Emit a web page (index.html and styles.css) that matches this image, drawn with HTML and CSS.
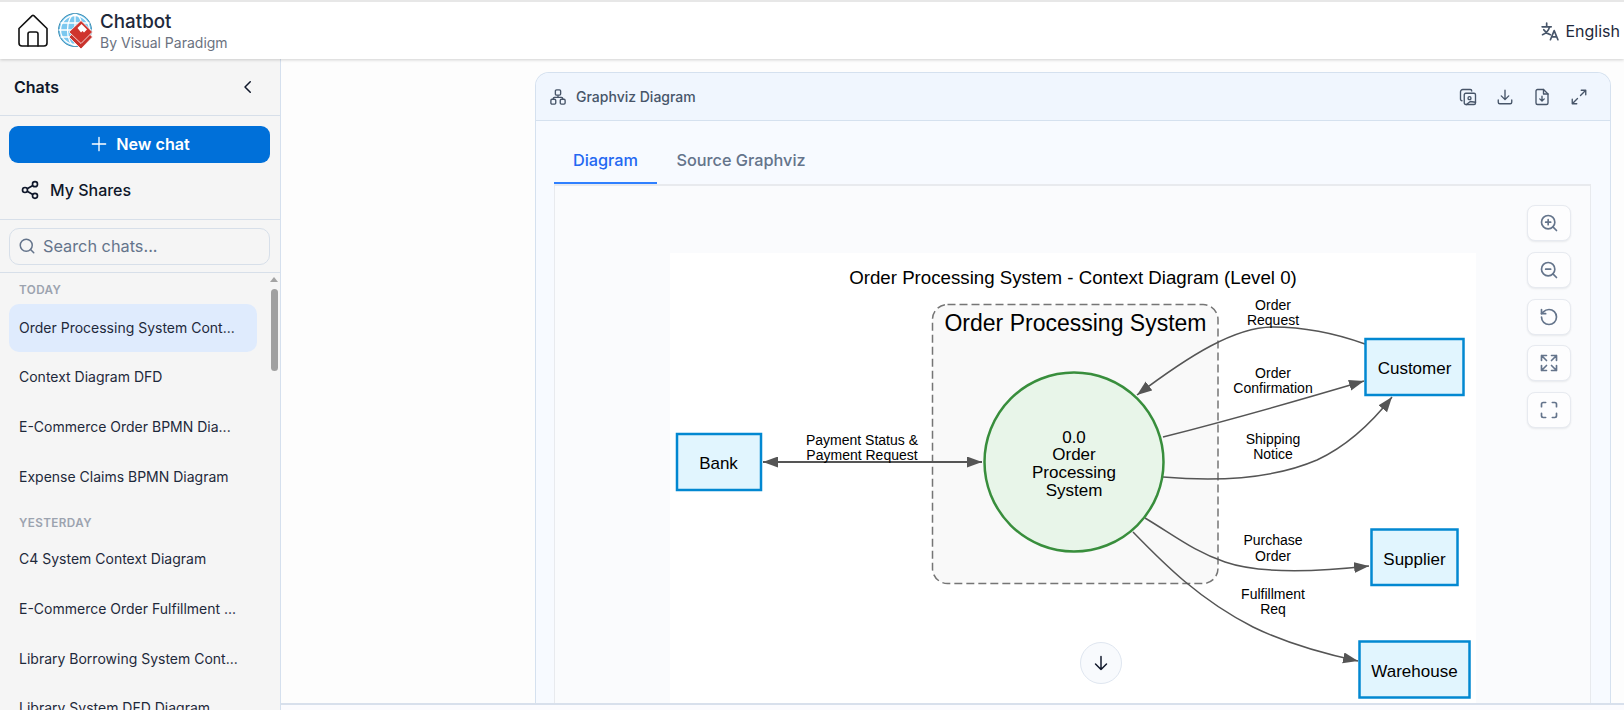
FILE: index.html
```html
<!DOCTYPE html>
<html lang="en">
<head>
<meta charset="utf-8">
<title>Chatbot</title>
<link rel="stylesheet" href="styles.css">
</head>
<body>
<div class="app">
  <header class="topbar">
    <div class="brand">
      <svg class="home-icon" viewBox="0 0 32 34" fill="none" stroke="#111" stroke-width="1.6" stroke-linejoin="round" stroke-linecap="round"><path d="M2 14.5 15.2 1.6a1.2 1.2 0 0 1 1.6 0L30 14.5V29a3 3 0 0 1-3 3H5a3 3 0 0 1-3-3Z"/><path d="M11 32V20a2 2 0 0 1 2-2h6a2 2 0 0 1 2 2v12"/></svg>
      <svg class="logo" viewBox="0 0 36 38"><circle cx="18" cy="18" r="16.500" fill="#7cc8ef" stroke="#3f8fb5" stroke-width="1"/><g fill="none" stroke="#fff" stroke-width="1.300"><circle cx="18" cy="18" r="14.500"/><ellipse cx="18" cy="18" rx="7.500" ry="15.500"/><path d="M18 2v32M3.500 11h29M3.500 25h29M1.500 18h33"/></g><path d="M12 25 24 13.500 35.500 25 24 37Z" fill="#c9332d" stroke="#fff" stroke-width=".8"/><path d="M12 20 24 8.500 35.500 20 24 31.500Z" fill="#cf342d" stroke="#fff" stroke-width=".8"/><path d="M20.500 16 24.500 12 30 17.500 27 20.500 25.500 19 24 20.500Z" fill="#fff"/></svg>
      <div class="brand-text">
        <div class="brand-name">Chatbot</div>
        <div class="brand-sub">By Visual Paradigm</div>
      </div>
    </div>
    <div class="lang">
      <svg class="lang-icon" viewBox="0 0 24 24" fill="none" stroke="#475569" stroke-width="2" stroke-linecap="round" stroke-linejoin="round"><path d="M2.500 7h11M8 2.500V7M4.500 10.500c2 3 4.500 5 8 6M11.500 7c-1 4-4 7.500-8.500 9.500"/><path d="m12.500 22.500 4.500-11 4.500 11M14 19h6"/></svg>
      <span>English</span>
    </div>
  </header>

  <div class="body">
    <aside class="sidebar">
      <div class="side-head">
        <span class="side-title">Chats</span>
        <svg class="chev" viewBox="0 0 24 24" fill="none" stroke="#0f172a" stroke-width="2" stroke-linecap="round" stroke-linejoin="round"><path d="m15 5-7 7 7 7"/></svg>
      </div>
      <div class="side-actions">
        <button class="new-chat">
          <svg class="plus" viewBox="0 0 24 24" fill="none" stroke="#fff" stroke-width="1.600" stroke-linecap="round"><path d="M12 4v16M4 12h16"/></svg>
          <span>New chat</span>
        </button>
        <div class="shares">
          <svg class="share-icon" viewBox="0 0 24 24" fill="none" stroke="#0f172a" stroke-width="2"><circle cx="18" cy="5" r="3"/><circle cx="6" cy="12" r="3"/><circle cx="18" cy="19" r="3"/><path d="m8.600 13.500 6.800 4M15.400 6.500l-6.800 4"/></svg>
          <span>My Shares</span>
        </div>
      </div>
      <div class="search-wrap">
        <div class="search">
          <svg class="search-icon" viewBox="0 0 24 24" fill="none" stroke="#64748b" stroke-width="2" stroke-linecap="round"><circle cx="11" cy="11" r="8"/><path d="m21 21-4.300-4.300"/></svg>
          <span>Search chats...</span>
        </div>
      </div>
      <div class="chat-scroll">
        <div class="chat-list">
          <div class="group-label">TODAY</div>
          <div class="chat-item active">Order Processing System Cont...</div>
          <div class="chat-item">Context Diagram DFD</div>
          <div class="chat-item">E-Commerce Order BPMN Dia...</div>
          <div class="chat-item">Expense Claims BPMN Diagram</div>
          <div class="group-label second">YESTERDAY</div>
          <div class="chat-item">C4 System Context Diagram</div>
          <div class="chat-item">E-Commerce Order Fulfillment ...</div>
          <div class="chat-item">Library Borrowing System Cont...</div>
          <div class="chat-item">Library System DFD Diagram</div>
        </div>
        <div class="scrollbar">
          <div class="scroll-arrow"></div>
          <div class="scroll-thumb"></div>
        </div>
      </div>
    </aside>

    <main class="main">
      <section class="card">
        <div class="card-head">
          <div class="card-title">
            <svg class="net-icon" viewBox="0 0 24 24" fill="none" stroke="#475569" stroke-width="1.800"><rect x="8.500" y="2.500" width="7" height="7" rx="1.500"/><rect x="2.500" y="15" width="6.500" height="6.500" rx="1.500"/><rect x="15" y="15" width="6.500" height="6.500" rx="1.500"/><path d="M12 9.500V12.500M5.700 15v-1a1.500 1.500 0 0 1 1.500-1.500h9.600a1.500 1.500 0 0 1 1.500 1.500v1"/></svg>
            <span>Graphviz Diagram</span>
          </div>
          <div class="card-tools">
            <svg class="tool" viewBox="0 0 24 24" fill="none" stroke="#475569" stroke-width="1.800" stroke-linecap="round" stroke-linejoin="round"><path d="M4 17a2 2 0 0 1-2-2V5a3 3 0 0 1 3-3h10a2 2 0 0 1 2 2"/><rect x="7" y="7" width="15" height="15" rx="2"/><circle cx="14" cy="13.500" r="2"/><path d="m10 22 5-4 7 1"/></svg>
            <svg class="tool" viewBox="0 0 24 24" fill="none" stroke="#475569" stroke-width="1.800" stroke-linecap="round" stroke-linejoin="round"><path d="M12 3v12M7 10.500l5 5 5-5M3 16v3a2 2 0 0 0 2 2h14a2 2 0 0 0 2-2v-3"/></svg>
            <svg class="tool" viewBox="0 0 24 24" fill="none" stroke="#475569" stroke-width="1.800" stroke-linecap="round" stroke-linejoin="round"><path d="M14 2H6a2 2 0 0 0-2 2v16a2 2 0 0 0 2 2h12a2 2 0 0 0 2-2V8Z"/><path d="M14 2v6h6M12 11v6M9 14.500l3 3 3-3"/></svg>
            <svg class="tool" viewBox="0 0 24 24" fill="none" stroke="#475569" stroke-width="1.800" stroke-linecap="round" stroke-linejoin="round"><path d="M14 10l7-7M15 3h6v6M10 14l-7 7M9 21H3v-6"/></svg>
          </div>
        </div>
        <div class="card-body">
          <div class="tabs">
            <div class="tab active">Diagram</div>
            <div class="tab">Source Graphviz</div>
          </div>
          <div class="canvas">
            <svg class="diagram" viewBox="670 253 806 450">
              <defs>
                <marker id="tip" markerWidth="16" markerHeight="12" refX="15" refY="5.500" orient="auto" markerUnits="userSpaceOnUse"><path d="M0 0 15 5.500 0 11Z" fill="#555"/></marker>
                <marker id="tipStart" markerWidth="16" markerHeight="12" refX="0" refY="5.500" orient="auto" markerUnits="userSpaceOnUse"><path d="M15 0 0 5.500 15 11Z" fill="#555"/></marker>
              </defs>
              <text class="t-title" x="1073" y="284">Order Processing System - Context Diagram (Level 0)</text>
              <rect class="cluster" x="932.500" y="304.500" width="285.500" height="279" rx="15"/>
              <text class="t-cluster" x="1075.500" y="331">Order Processing System</text>

              <path class="edge thick" d="M763 462H982" marker-start="url(#tipStart)" marker-end="url(#tip)"/>
              <path class="edge" d="M1365 344C1340 335 1310 327 1273 327C1235 327 1190 355 1137 395" marker-end="url(#tip)"/>
              <path class="edge" d="M1163 437C1230 420 1300 400 1364 381" marker-end="url(#tip)"/>
              <path class="edge" d="M1163 477C1220 482 1275 478 1317 460C1345 447 1370 425 1392 397" marker-end="url(#tip)"/>
              <path class="edge" d="M1145 518C1175 536 1195 552 1225 562C1260 574 1315 572 1369 566" marker-end="url(#tip)"/>
              <path class="edge" d="M1133 532C1165 565 1200 600 1253 627C1290 645 1325 654 1358 661" marker-end="url(#tip)"/>

              <circle class="process" cx="1074" cy="462" r="89.500"/>
              <text class="t-node" x="1074" y="443">0.0</text>
              <text class="t-node" x="1074" y="460">Order</text>
              <text class="t-node" x="1074" y="478">Processing</text>
              <text class="t-node" x="1074" y="496">System</text>

              <rect class="entity" x="677" y="434" width="84" height="56"/>
              <text class="t-node" x="718.500" y="469">Bank</text>
              <rect class="entity" x="1365.500" y="339" width="98" height="56"/>
              <text class="t-node" x="1414.500" y="374">Customer</text>
              <rect class="entity" x="1371.500" y="529.500" width="86" height="55.500"/>
              <text class="t-node" x="1414.500" y="565">Supplier</text>
              <rect class="entity" x="1359.500" y="641.500" width="110" height="56"/>
              <text class="t-node" x="1414.500" y="677">Warehouse</text>

              <text class="t-edge" x="862" y="445">Payment Status &amp;</text>
              <text class="t-edge" x="862" y="460">Payment Request</text>
              <text class="t-edge" x="1273" y="310">Order</text>
              <text class="t-edge" x="1273" y="325">Request</text>
              <text class="t-edge" x="1273" y="378">Order</text>
              <text class="t-edge" x="1273" y="393">Confirmation</text>
              <text class="t-edge" x="1273" y="444">Shipping</text>
              <text class="t-edge" x="1273" y="459">Notice</text>
              <text class="t-edge" x="1273" y="545">Purchase</text>
              <text class="t-edge" x="1273" y="561">Order</text>
              <text class="t-edge" x="1273" y="599">Fulfillment</text>
              <text class="t-edge" x="1273" y="614">Req</text>
            </svg>
            <div class="zoom-tools">
              <div class="zbtn"><svg viewBox="0 0 24 24" fill="none" stroke="#64748b" stroke-width="2" stroke-linecap="round"><circle cx="11" cy="11" r="8"/><path d="m21 21-4.300-4.300M11 8v6M8 11h6"/></svg></div>
              <div class="zbtn"><svg viewBox="0 0 24 24" fill="none" stroke="#64748b" stroke-width="2" stroke-linecap="round"><circle cx="11" cy="11" r="8"/><path d="m21 21-4.300-4.300M8 11h6"/></svg></div>
              <div class="zbtn"><svg viewBox="0 0 24 24" fill="none" stroke="#64748b" stroke-width="2" stroke-linecap="round" stroke-linejoin="round"><path d="M3 12a9 9 0 1 0 9-9 9.750 9.750 0 0 0-6.740 2.740L3 8"/><path d="M3 3v5h5"/></svg></div>
              <div class="zbtn"><svg viewBox="0 0 24 24" fill="none" stroke="#64748b" stroke-width="2" stroke-linecap="round" stroke-linejoin="round"><path d="M3 9V3h6M3 3l6 6M21 9V3h-6M21 3l-6 6M3 15v6h6M3 21l6-6M21 15v6h-6M21 21l-6-6"/></svg></div>
              <div class="zbtn"><svg viewBox="0 0 24 24" fill="none" stroke="#64748b" stroke-width="2" stroke-linecap="round" stroke-linejoin="round"><path d="M3 8V5a2 2 0 0 1 2-2h3M16 3h3a2 2 0 0 1 2 2v3M21 16v3a2 2 0 0 1-2 2h-3M8 21H5a2 2 0 0 1-2-2v-3"/></svg></div>
            </div>
            <div class="scroll-down"><svg viewBox="0 0 24 24" fill="none" stroke="#0f172a" stroke-width="1.600" stroke-linecap="round" stroke-linejoin="round"><path d="M12 5v14M6 13l6 6 6-6"/></svg></div>
          </div>
        </div>
      </section>
      <div class="bottom-line"></div>
    </main>
  </div>
</div>
</body>
</html>
```

FILE: styles.css
```css
* { box-sizing: border-box; }
html, body { margin: 0; height: 100%; overflow: hidden; }
body { font-family: Inter, "Liberation Sans", sans-serif; color: #0f172a; background: #fff; }
.app { width: 1624px; height: 710px; display: flex; flex-direction: column; overflow: hidden; }

.topbar { height: 59px; flex: none; border-top: 2px solid #e7e7e7; background: #fff; display: flex; align-items: center; justify-content: space-between; padding-right: 4px; box-shadow: 0 1px 3px rgba(0,0,0,.18); position: relative; z-index: 2; }
.brand { display: flex; align-items: center; padding-left: 17px; }
.home-icon { width: 32px; height: 34px; }
.logo { width: 36px; height: 38px; margin-left: 8px; }
.brand-text { margin-left: 7px; display: flex; flex-direction: column; }
.brand-name { font-size: 18.800px; font-weight: 500; line-height: 24px; color: #1e293b; }
.brand-sub { font-size: 14px; line-height: 17px; color: #6b7280; }
.lang { display: flex; align-items: center; gap: 5px; font-size: 16px; color: #1e293b; }
.lang-icon { width: 20px; height: 20px; }

.body { flex: 1; display: flex; min-height: 0; }
.sidebar { width: 281px; flex: none; background: #f5f5f5; border-right: 1px solid #d5e0ee; display: flex; flex-direction: column; }
.side-head { height: 57px; flex: none; display: flex; align-items: center; justify-content: space-between; padding: 0 23px 0 14px; border-bottom: 1px solid #d7dfe9; }
.side-title { font-size: 16px; font-weight: 600; }
.chev { width: 18px; height: 18px; }
.side-actions { height: 104px; flex: none; padding: 10px 10px 0 9px; border-bottom: 1px solid #d7dfe9; }
.new-chat { width: 261px; height: 37px; border: 0; border-radius: 9px; background: #0070d9; color: #fff; font: 600 16.200px Inter, sans-serif; display: flex; align-items: center; justify-content: center; gap: 7px; padding: 0 0 2px; }
.plus { width: 20px; height: 20px; }
.shares { display: flex; align-items: center; gap: 10px; height: 54px; padding-left: 11px; font-size: 16px; font-weight: 500; }
.share-icon { width: 20px; height: 20px; }
.search-wrap { height: 53px; flex: none; padding: 8px 10px 0 9px; border-bottom: 1px solid #d7dfe9; }
.search { height: 37px; border: 1px solid #d7dfe9; border-radius: 10px; display: flex; align-items: center; gap: 7px; padding: 0 0 2px 8px; font-size: 16.300px; color: #64748b; }
.search-icon { width: 18px; height: 18px; }
.chat-scroll { flex: 1; min-height: 0; display: flex; overflow: hidden; }
.chat-list { width: 270px; padding: 8px 0 0 9px; }
.group-label { font-size: 11.700px; font-weight: 600; color: #9ca3af; letter-spacing: .4px; padding-left: 10px; height: 23px; line-height: 18px; }
.group-label.second { margin-top: 13px; height: 20px; line-height: 16px; }
.chat-item { width: 248px; height: 49.700px; padding: 0 0 2px 10px; display: flex; align-items: center; font-size: 14px; color: #1e293b; border-radius: 10px; white-space: nowrap; }
.chat-item.active { height: 48px; margin-bottom: 1px; background: #dfebfd; }
.scrollbar { flex: 1; display: flex; flex-direction: column; align-items: center; padding-top: 4px; padding-right: 2px; }
.scroll-arrow { width: 0; height: 0; border-left: 4px solid transparent; border-right: 4px solid transparent; border-bottom: 5px solid #a3a3a3; }
.scroll-thumb { width: 7px; height: 82px; margin-top: 7px; border-radius: 4px; background: #a0a0a0; }

.main { flex: 1; min-width: 0; background: #fdfdfd; padding: 13px 13px 0 254px; display: flex; flex-direction: column; position: relative; }
.card { height: 631px; flex: none; border: 1px solid #d5e1ef; border-bottom: 0; border-radius: 14px 14px 0 0; background: #f7faff; display: flex; flex-direction: column; }
.card-head { height: 48px; flex: none; background: #f0f6fe; border-bottom: 1px solid #d5e1ef; border-radius: 13px 13px 0 0; display: flex; align-items: center; justify-content: space-between; padding: 0 22px 0 13px; }
.card-title { display: flex; align-items: center; gap: 9px; font-size: 14px; font-weight: 500; color: #475569; }
.net-icon { width: 18px; height: 18px; }
.card-tools { display: flex; gap: 19px; }
.tool { width: 18px; height: 18px; display: block; }
.card-body { flex: 1; min-height: 0; padding: 19px 19px 0 18px; display: flex; flex-direction: column; }
.tabs { height: 44px; flex: none; display: flex; }
.tab { width: 103px; font-size: 16.300px; font-weight: 500; color: #64748b; text-align: center; line-height: 41px; white-space: nowrap; }
.tab + .tab { width: 158px; margin-left: 5px; }
.tab.active { color: #2468f2; border-bottom: 2px solid #2f80ff; }
.canvas { flex: 1; min-height: 0; position: relative; background: #fafbfd; border-top: 2px solid #e8eaee; border-left: 1px solid #e8eaee; border-right: 1px solid #e8eaee; }
.diagram { position: absolute; left: 115px; top: 67px; width: 806px; height: 450px; background: #fff; display: block; }
.t-title, .t-cluster, .t-node, .t-edge { font-family: "Liberation Sans", Arial, sans-serif; text-anchor: middle; fill: #000; }
.t-title { font-size: 18.700px; }
.t-cluster { font-size: 23px; }
.t-node { font-size: 17px; }
.t-edge { font-size: 14px; }
.cluster { fill: #f9f9f9; stroke: #757575; stroke-width: 1.500; stroke-dasharray: 8 4; }
.edge { fill: none; stroke: #555; stroke-width: 1.500; }
.edge.thick { stroke-width: 2; }
.process { fill: #e8f5e9; stroke: #388e3c; stroke-width: 2.500; }
.entity { fill: #e1f5fe; stroke: #0288d1; stroke-width: 2.500; }
.zoom-tools { position: absolute; left: 972px; top: 19px; display: flex; flex-direction: column; gap: 10.750px; }
.zbtn { width: 44px; height: 36px; border: 1px solid #e7eaf0; border-radius: 8px; background: #fdfdfe; box-shadow: 0 1px 2px rgba(15,23,42,.08); display: flex; align-items: center; justify-content: center; }
.zbtn svg { width: 20px; height: 20px; }
.scroll-down { position: absolute; left: 525px; top: 456px; width: 42px; height: 42px; border-radius: 50%; border: 1px solid #dfe6f0; background: #f8fafd; display: flex; align-items: center; justify-content: center; }
.scroll-down svg { width: 22px; height: 22px; }
.bottom-line { position: absolute; left: 0; right: 0; top: 644px; height: 7px; background: #fbfbfe; border-top: 2px solid #d8e0ec; }
```
